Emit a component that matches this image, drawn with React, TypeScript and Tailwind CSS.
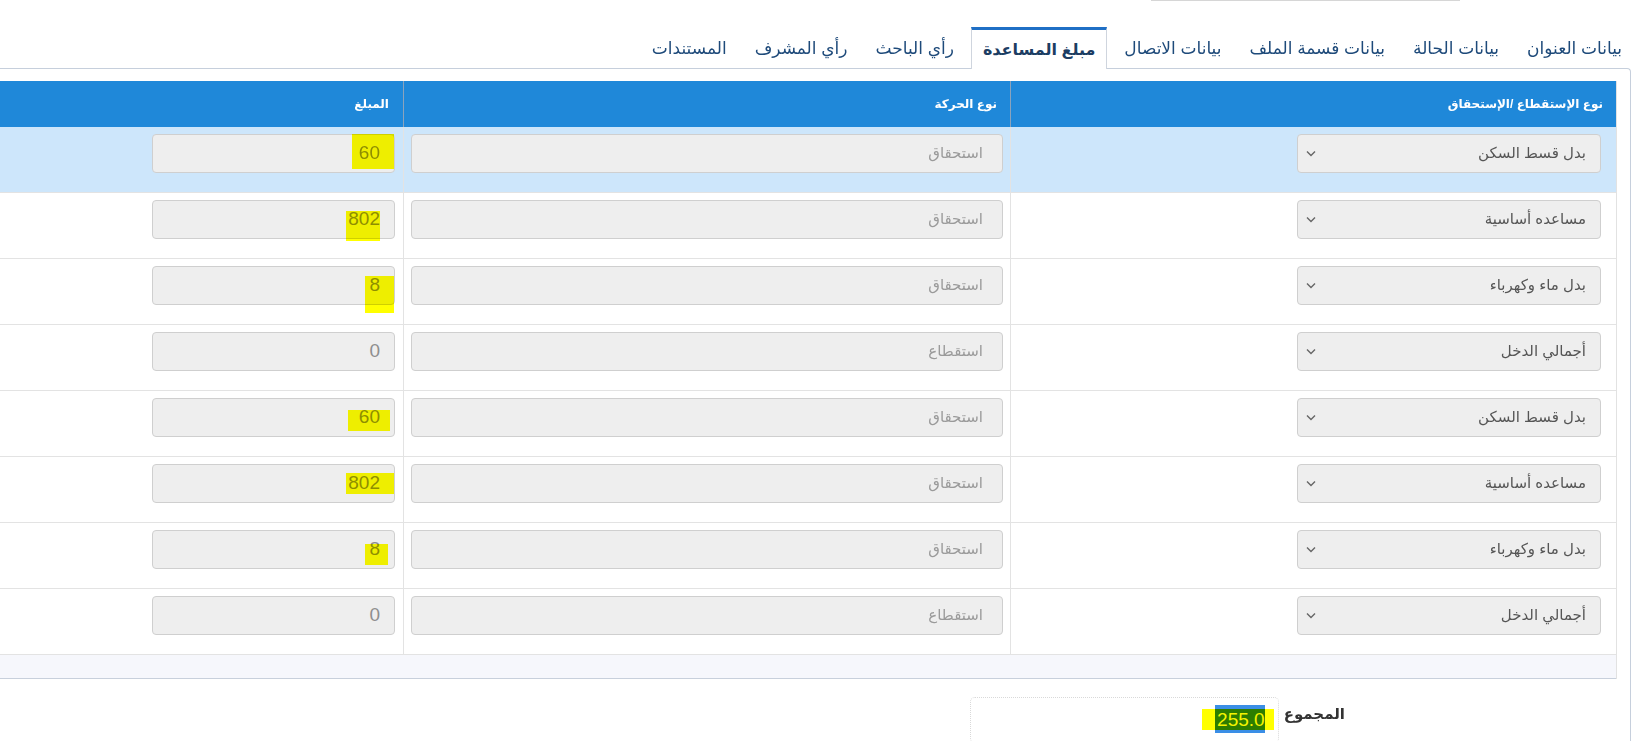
import React from "react";

type HL = { top: number; h: number; right: number; w: number };
type Row = { sel: string; mv: string; amt: string; hl?: HL };

const rows: Row[] = [
  { sel: "بدل قسط السكن", mv: "استحقاق", amt: "60", hl: { top: -1, h: 35, right: 0, w: 42 } },
  { sel: "مساعده أساسية", mv: "استحقاق", amt: "802", hl: { top: 10, h: 30, right: 14, w: 34 } },
  { sel: "بدل ماء وكهرباء", mv: "استحقاق", amt: "8", hl: { top: 9, h: 37, right: 0, w: 29 } },
  { sel: "أجمالي الدخل", mv: "استقطاع", amt: "0" },
  { sel: "بدل قسط السكن", mv: "استحقاق", amt: "60", hl: { top: 11, h: 21, right: 4, w: 42 } },
  { sel: "مساعده أساسية", mv: "استحقاق", amt: "802", hl: { top: 8, h: 21, right: 0, w: 48 } },
  { sel: "بدل ماء وكهرباء", mv: "استحقاق", amt: "8", hl: { top: 13, h: 21, right: 6, w: 23 } },
  { sel: "أجمالي الدخل", mv: "استقطاع", amt: "0" },
];

const tabs = [
  "بيانات العنوان",
  "بيانات الحالة",
  "بيانات قسمة الملف",
  "بيانات الاتصال",
  "مبلغ المساعدة",
  "رأي الباحث",
  "رأي المشرف",
  "المستندات",
];

function Chevron() {
  return (
    <svg width="10" height="7" viewBox="0 0 10 7" className="shrink-0">
      <polyline points="1,1.5 5,5.5 9,1.5" fill="none" stroke="#666" strokeWidth="1.4" />
    </svg>
  );
}

export default function App() {
  return (
    <div
      dir="rtl"
      className="w-[1644px] h-[741px] overflow-hidden bg-white flex flex-col [font-family:Liberation_Sans,DejaVu_Sans,sans-serif]"
    >
      {/* bottom edge of a field above */}
      <div className="h-px w-[309px] mr-[184px] bg-[#d6d6d6] shrink-0" />
      <div className="h-[26px] shrink-0" />

      <div className="w-[1631px] mr-[13px] flex flex-col shrink-0">
        {/* tabs */}
        <div className="flex h-[41px] items-stretch gap-[6px] -mr-[2px]">
          {tabs.map((t, i) =>
            i === 4 ? (
              <div
                key={t}
                className="relative z-10 -mb-px h-[42px] px-[11px] flex items-center bg-white border-t-[3px] border-t-[#1f6fc5] border-x border-x-[#cfd5de] text-[16px] font-bold text-[#1c3d63] whitespace-nowrap"
              >
                {t}
              </div>
            ) : (
              <div
                key={t}
                className="px-[11px] pt-[3px] flex items-center text-[17px] text-[#1e4a7a] whitespace-nowrap"
              >
                {t}
              </div>
            )
          )}
        </div>

        {/* panel */}
        <div className="border-t border-r border-[#c6cfdc] rounded-tr-[4px] pt-[12px] pr-[13px] h-[700px]">
          <div className="w-[1617px] border-r border-[#e2e2e2]">
            {/* header */}
            <div className="flex h-[46px] bg-[#1f88d9] text-white text-[12px] font-bold">
              <div className="w-[606px] shrink-0 border-l border-[#8aa3bd] flex items-center pr-[13px]">
                نوع الإستقطاع /الإستحقاق
              </div>
              <div className="w-[607px] shrink-0 border-l border-[#8aa3bd] flex items-center pr-[13px]">
                نوع الحركة
              </div>
              <div className="flex-1 flex items-center pr-[14px]">المبلغ</div>
            </div>

            {/* body */}
            {rows.map((r, i) => (
              <div
                key={i}
                className={
                  i === 0
                    ? "flex h-[66px] border-b border-[#e3e3e3] bg-[#cde6fb]"
                    : "flex h-[66px] border-b border-[#e3e3e3] bg-white"
                }
              >
                <div className="w-[606px] shrink-0 border-l border-[#e3e3e3] pt-[7px] pr-[15px]">
                  <div className="w-[304px] h-[39px] rounded-[4px] border border-[#cfcfcf] bg-[#eeeeee] flex items-center justify-between pr-[14px] pl-[8px] text-[15px] text-[#555]">
                    <span>{r.sel}</span>
                    <Chevron />
                  </div>
                </div>
                <div className="w-[607px] shrink-0 border-l border-[#e3e3e3] pt-[7px] pr-[7px] pl-[7px]">
                  <div className="w-full h-[39px] rounded-[4px] border border-[#cfcfcf] bg-[#eeeeee] flex items-center pr-[19px] text-[15px] text-[#9a9a9a]">
                    {r.mv}
                  </div>
                </div>
                <div className="flex-1 pt-[7px] pr-[8px]">
                  <div className="relative w-[243px] h-[39px] rounded-[4px] border border-[#cfcfcf] bg-[#eeeeee] flex items-center pr-[14px] text-[19px] text-[#8e8e8e]">
                    {r.amt}
                    {r.hl && (
                      <div
                        className="absolute bg-[#ffff00] mix-blend-multiply"
                        style={{ top: r.hl.top, height: r.hl.h, right: r.hl.right, width: r.hl.w }}
                      />
                    )}
                  </div>
                </div>
              </div>
            ))}

            {/* footer strip */}
            <div className="h-[24px] bg-[#f6f7fc] border-b border-[#c8d0dc]" />
          </div>

          {/* total */}
          <div className="flex items-start mt-[18px] pr-[272px]">
            <div className="pt-[6px] text-[15px] font-bold text-[#333] ml-[5px]">المجموع</div>
            <div className="relative w-[309px] h-[46px] rounded-[5px] border border-dotted border-[#d9d9d9] bg-white">
              <div className="absolute top-[11px] right-[4px] w-[72px] h-[21px] bg-[#ffff00]" />
              <div className="absolute top-[7px] right-[13px] w-[50px] h-[28px] bg-[#3a8ee6]" />
              <div className="absolute top-[11px] right-[13px] w-[50px] h-[21px] bg-[#2d7d00]" />
              <div className="absolute top-[7px] right-[13px] h-[28px] flex items-center text-[19px] text-[#f4f400] leading-none">
                255.0
              </div>
            </div>
          </div>
        </div>
      </div>
    </div>
  );
}
